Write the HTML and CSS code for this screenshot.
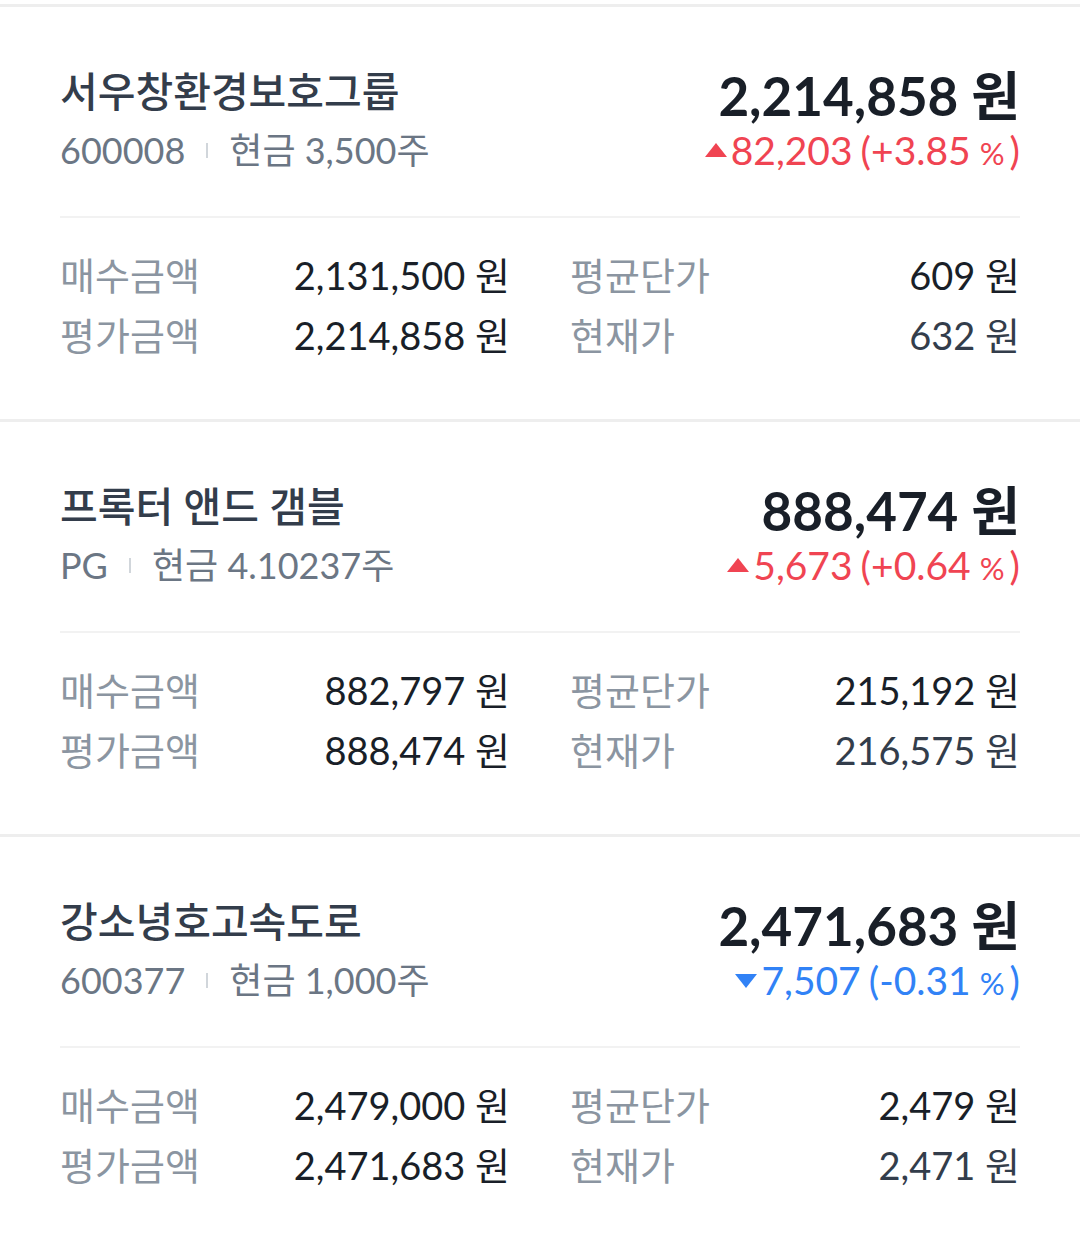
FILE: index.html
```html
<!DOCTYPE html>
<html lang="ko">

<head>
    <meta charset="UTF-8">
    <title>보유 종목</title>
    <link rel="stylesheet" href="styles.css">
</head>

<body>
    <div class="list">
        <!-- 종목 1 -->
        <section class="stock">
            <div class="stock-head">
                <div class="stock-info">
                    <h3 class="stock-name">서우창환경보호그룹</h3>
                    <p class="stock-sub">600008<span class="bar"></span>현금 3,500주</p>
                </div>
                <div class="stock-value">
                    <p class="total">2,214,858 원</p>
                    <p class="change up">
                        <svg class="tri" viewBox="0 0 22 14" width="22" height="14"><path d="M11 0 L22 14 L0 14 Z" fill="currentColor"/></svg>82,203<span class="paren">(+3.85<span class="pct">%</span>)</span>
                    </p>
                </div>
            </div>
            <div class="stock-detail">
                <div class="cell"><span class="label">매수금액</span><span class="num">2,131,500 원</span></div>
                <div class="cell"><span class="label">평균단가</span><span class="num">609 원</span></div>
                <div class="cell"><span class="label">평가금액</span><span class="num">2,214,858 원</span></div>
                <div class="cell"><span class="label">현재가</span><span class="num now">632 원</span></div>
            </div>
        </section>

        <!-- 종목 2 -->
        <section class="stock">
            <div class="stock-head">
                <div class="stock-info">
                    <h3 class="stock-name">프록터 앤드 갬블</h3>
                    <p class="stock-sub">PG<span class="bar"></span>현금 4.10237주</p>
                </div>
                <div class="stock-value">
                    <p class="total">888,474 원</p>
                    <p class="change up">
                        <svg class="tri" viewBox="0 0 22 14" width="22" height="14"><path d="M11 0 L22 14 L0 14 Z" fill="currentColor"/></svg>5,673<span class="paren">(+0.64<span class="pct">%</span>)</span>
                    </p>
                </div>
            </div>
            <div class="stock-detail">
                <div class="cell"><span class="label">매수금액</span><span class="num">882,797 원</span></div>
                <div class="cell"><span class="label">평균단가</span><span class="num">215,192 원</span></div>
                <div class="cell"><span class="label">평가금액</span><span class="num">888,474 원</span></div>
                <div class="cell"><span class="label">현재가</span><span class="num now">216,575 원</span></div>
            </div>
        </section>

        <!-- 종목 3 -->
        <section class="stock">
            <div class="stock-head">
                <div class="stock-info">
                    <h3 class="stock-name">강소녕호고속도로</h3>
                    <p class="stock-sub">600377<span class="bar"></span>현금 1,000주</p>
                </div>
                <div class="stock-value">
                    <p class="total">2,471,683 원</p>
                    <p class="change down">
                        <svg class="tri" viewBox="0 0 22 14" width="22" height="14"><path d="M0 0 L22 0 L11 14 Z" fill="currentColor"/></svg>7,507<span class="paren">(-0.31<span class="pct">%</span>)</span>
                    </p>
                </div>
            </div>
            <div class="stock-detail">
                <div class="cell"><span class="label">매수금액</span><span class="num">2,479,000 원</span></div>
                <div class="cell"><span class="label">평균단가</span><span class="num">2,479 원</span></div>
                <div class="cell"><span class="label">평가금액</span><span class="num">2,471,683 원</span></div>
                <div class="cell"><span class="label">현재가</span><span class="num now">2,471 원</span></div>
            </div>
        </section>
    </div>
</body>

</html>
```

FILE: styles.css
```css
body {
    margin: 0;
    font-family: "Lato", "Noto Sans CJK KR", sans-serif;
    background: #fff;
    color: #191f28;
}

p,
h3 {
    margin: 0;
}

.list {
    padding-top: 4px;
}

.stock {
    border-top: 3px solid #eeeeee;
    padding: 0 60px;
}

.stock-head {
    display: flex;
    justify-content: space-between;
    padding: 59px 0 42px;
    border-bottom: 2px solid #f2f2f2;
}

.stock-name {
    font-size: 41px;
    line-height: 52px;
    height: 52px;
    font-weight: 500;
    color: #333d4b;
}

.stock-sub {
    margin-top: 8px;
    font-size: 36px;
    line-height: 48px;
    height: 48px;
    color: #6b7684;
    display: flex;
    align-items: center;
}

.bar {
    display: inline-block;
    width: 2px;
    height: 15px;
    background: #d1d6db;
    margin: 0 21px;
}

.stock-value {
    display: flex;
    flex-direction: column;
    align-items: flex-end;
}

.total {
    font-size: 53px;
    line-height: 60px;
    height: 60px;
    font-weight: 700;
    color: #191f28;
}

.change {
    font-size: 39px;
    line-height: 48px;
    height: 48px;
    display: flex;
    align-items: center;
}

.change.up {
    color: #f04452;
}

.change.down {
    color: #3182f6;
}

.tri {
    margin-right: 4px;
}

.change.down .tri {
    margin-top: 2px;
}

.paren {
    margin-left: 8px;
}

.pct {
    font-size: 31px;
    line-height: 1;
    margin: 0 5px 0 9px;
}

.stock-detail {
    display: grid;
    grid-template-columns: 1fr 1fr;
    column-gap: 60px;
    padding: 27px 0 54px;
}

.cell {
    display: flex;
    justify-content: space-between;
    height: 60px;
    line-height: 60px;
    font-size: 38px;
}

.label {
    color: #8b95a1;
}

.num {
    color: #191f28;
}

.num.now {
    color: #333d4b;
}
```
